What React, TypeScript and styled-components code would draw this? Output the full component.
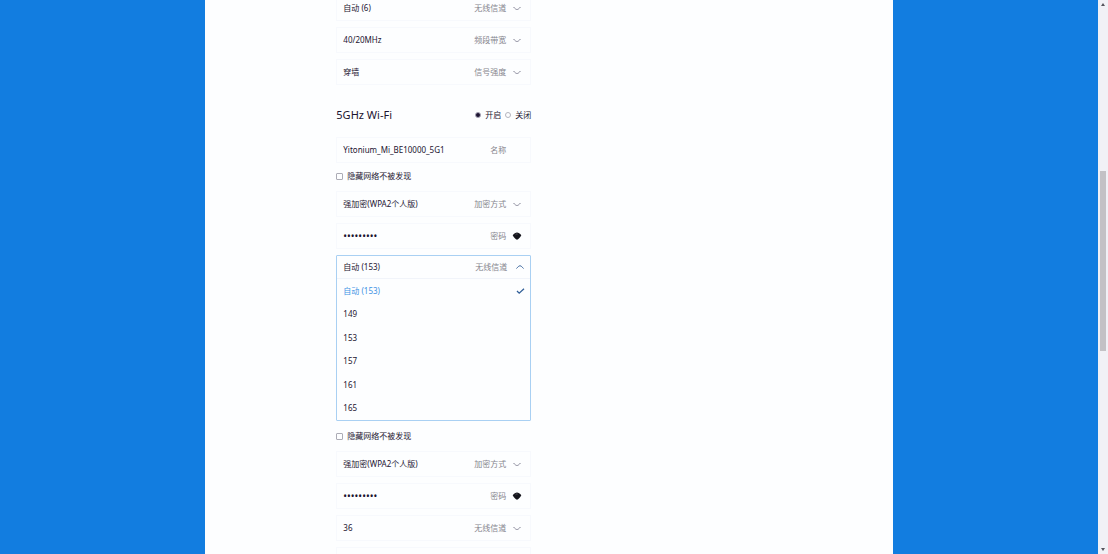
import React, { useState } from "react";
import styled, { createGlobalStyle } from "styled-components";

const GlobalStyle = createGlobalStyle`
  * { box-sizing: border-box; }
  body {
    margin: 0;
    overflow: hidden;
    font-family: "Noto Sans", "Noto Sans CJK SC", sans-serif;
    font-size: 8px;
    line-height: 12px;
    color: #1c1430;
  }
  button, input, select { font: inherit; color: inherit; }
`;

const Page = styled.div`
  display: flex;
  height: 100vh;
  overflow: hidden;
  background: #127de0;
`;

const Viewport = styled.div`
  flex: 1;
  display: flex;
  justify-content: center;
  min-width: 0;
  overflow: hidden;
`;

const Panel = styled.main`
  width: 62.6%;
  height: 100%;
  padding-left: 131px;
  overflow: hidden;
  background: #fdfeff;
`;

const Form = styled.form`
  display: flex;
  flex-direction: column;
  gap: 6px;
  width: 195px;
  margin-top: -5px;
`;

const Field = styled.label`
  display: flex;
  align-items: center;
  flex: none;
  height: 26px;
  padding: 0 8px 0 6px;
  border: 1px solid #f7f9fd;
`;

const FieldLabel = styled.span`
  flex: none;
  color: #85858d;
`;

const Select = styled.select`
  flex: 1;
  min-width: 0;
  padding: 0;
  border: 0;
  outline: 0;
  appearance: none;
  background: transparent;
`;

const TextInput = styled.input`
  flex: 1;
  min-width: 0;
  padding: 0;
  border: 0;
  outline: 0;
  background: transparent;
  &[type="password"] { font-size: 10px; }
`;

const IconSlot = styled.span<{ $wide?: boolean }>`
  display: flex;
  justify-content: center;
  flex: none;
  width: 10px;
  margin-left: ${(p) => (p.$wide ? 8 : 6)}px;
`;

const EyeButton = styled.button`
  display: flex;
  justify-content: center;
  flex: none;
  width: 10px;
  margin-left: 6px;
  padding: 0;
  border: 0;
  background: transparent;
`;

const SectionHead = styled.div`
  display: flex;
  align-items: center;
  justify-content: space-between;
  flex: none;
  height: 40px;
  padding-top: 8px;
`;

const Title = styled.h2`
  margin: 0;
  font-size: 11px;
  font-weight: 400;
  line-height: 16px;
`;

const RadioGroup = styled.div`
  display: flex;
  gap: 4px;
`;

const Choice = styled.label`
  display: flex;
  align-items: center;
  gap: 4px;
`;

const Radio = styled.input`
  width: 6px;
  height: 6px;
  margin: 0;
  border: 1px solid #b4b4be;
  border-radius: 50%;
  appearance: none;
  &:checked {
    border-color: #a9a6b8;
    background: #1c1430;
  }
`;

const CheckRow = styled.label`
  display: flex;
  align-items: center;
  flex: none;
  gap: 4px;
  height: 14px;
  margin-bottom: 2px;
`;

const Checkbox = styled.input`
  width: 7px;
  height: 7px;
  margin: 0;
  border: 1px solid #acacb6;
  border-radius: 1px;
  appearance: none;
  &:checked { background: #127de0; }
`;

const OpenSelect = styled.div`
  flex: none;
  margin-bottom: 2px;
  border: 1px solid #a9d0f3;
  border-radius: 1px;
`;

const OpenHead = styled.button`
  display: flex;
  align-items: center;
  width: 100%;
  height: 23px;
  padding: 0 5px 0 6px;
  border: 0;
  border-bottom: 1px solid #f1f4fa;
  background: transparent;
  text-align: left;
`;

const OpenValue = styled.span`
  flex: 1;
`;

const Options = styled.ul`
  display: grid;
  grid-auto-rows: 1fr;
  height: 141px;
  margin: 0;
  padding: 0;
  list-style: none;
`;

const Option = styled.li<{ $selected: boolean }>`
  display: flex;
  align-items: center;
  justify-content: space-between;
  padding: 0 5px 0 6px;
  color: ${(p) => (p.$selected ? "#3d92e4" : "#1c1430")};
  cursor: pointer;
`;

const ScrollTrack = styled.div`
  display: flex;
  flex-direction: column;
  align-items: center;
  justify-content: space-between;
  flex: none;
  width: 10px;
  padding: 3px 0;
  background: #f1f1f6;
`;

const ScrollThumb = styled.div`
  width: 6px;
  height: 33%;
  margin-bottom: 32px;
  background: #c3c1c5;
`;

const Chevron = ({ up = false }: { up?: boolean }) => (
  <svg width="8" height="6" viewBox="0 0 8 6" fill="none" aria-hidden="true">
    <path
      d={up ? "M.5 4.5C2 2.8 3 1.8 4 1.8S6 2.8 7.5 4.5" : "M.5 2C2 3.7 3 4.5 4 4.5s2-.8 3.5-2.5"}
      stroke={up ? "#315f98" : "#88889a"}
    />
  </svg>
);

const Check = () => (
  <svg width="9" height="8" viewBox="0 0 9 8" fill="none" aria-hidden="true">
    <path d="M1 4 3.2 6.2 8 1.8" stroke="#315f98" strokeWidth="1.3" />
  </svg>
);

const Eye = () => (
  <svg width="10" height="8" viewBox="0 0 10 8" aria-hidden="true">
    <path d="M.7 3.2C2.2 1.6 3.6.5 5 .5s2.9 1.1 4.3 2.7C8 5.4 6.3 7.7 5 7.7S2 5.4.7 3.2Z" fill="#15151d" />
    <path d="M3.6 2.7c.6-.7 1.3-.9 2-.6" stroke="#85858d" strokeWidth=".6" fill="none" />
  </svg>
);

const Arrow = ({ down = false }: { down?: boolean }) => (
  <svg width="4" height="3" viewBox="0 0 4 3" aria-hidden="true">
    <path d={down ? "M0 0h4L2 3Z" : "M0 3h4L2 0Z"} fill="#55555d" />
  </svg>
);

function SelectField({ label, value }: { label: string; value: string }) {
  return (
    <Field>
      <Select defaultValue={value}>
        <option>{value}</option>
      </Select>
      <FieldLabel>{label}</FieldLabel>
      <IconSlot>
        <Chevron />
      </IconSlot>
    </Field>
  );
}

function PasswordField() {
  const [shown, setShown] = useState(false);
  return (
    <Field>
      <TextInput type={shown ? "text" : "password"} defaultValue="123456789" />
      <FieldLabel>密码</FieldLabel>
      <EyeButton type="button" aria-label="显示密码" onClick={() => setShown(!shown)}>
        <Eye />
      </EyeButton>
    </Field>
  );
}

function HideNetwork() {
  return (
    <CheckRow>
      <Checkbox type="checkbox" />
      隐藏网络不被发现
    </CheckRow>
  );
}

const CHANNELS = ["自动 (153)", "149", "153", "157", "161", "165"];

function ChannelSelect() {
  const [channel, setChannel] = useState(CHANNELS[0]);
  return (
    <OpenSelect>
      <OpenHead type="button" aria-haspopup="listbox" aria-expanded="true">
        <OpenValue>{channel}</OpenValue>
        <FieldLabel>无线信道</FieldLabel>
        <IconSlot $wide>
          <Chevron up />
        </IconSlot>
      </OpenHead>
      <Options role="listbox" aria-label="无线信道">
        {CHANNELS.map((c) => (
          <Option
            key={c}
            role="option"
            aria-selected={c === channel}
            $selected={c === channel}
            onClick={() => setChannel(c)}
          >
            {c}
            {c === channel && <Check />}
          </Option>
        ))}
      </Options>
    </OpenSelect>
  );
}

export default function App() {
  return (
    <Page>
      <GlobalStyle />
      <Viewport>
        <Panel>
          <Form>
            <SelectField label="无线信道" value="自动 (6)" />
            <SelectField label="频段带宽" value="40/20MHz" />
            <SelectField label="信号强度" value="穿墙" />
            <SectionHead>
              <Title>5GHz Wi-Fi</Title>
              <RadioGroup>
                <Choice>
                  <Radio type="radio" name="wifi5g" defaultChecked />
                  开启
                </Choice>
                <Choice>
                  <Radio type="radio" name="wifi5g" />
                  关闭
                </Choice>
              </RadioGroup>
            </SectionHead>
            <Field>
              <TextInput type="text" defaultValue="Yitonium_Mi_BE10000_5G1" />
              <FieldLabel>名称</FieldLabel>
              <IconSlot />
            </Field>
            <HideNetwork />
            <SelectField label="加密方式" value="强加密(WPA2个人版)" />
            <PasswordField />
            <ChannelSelect />
            <HideNetwork />
            <SelectField label="加密方式" value="强加密(WPA2个人版)" />
            <PasswordField />
            <SelectField label="无线信道" value="36" />
            <Field as="div" />
          </Form>
        </Panel>
      </Viewport>
      <ScrollTrack>
        <Arrow />
        <ScrollThumb />
        <Arrow down />
      </ScrollTrack>
    </Page>
  );
}
